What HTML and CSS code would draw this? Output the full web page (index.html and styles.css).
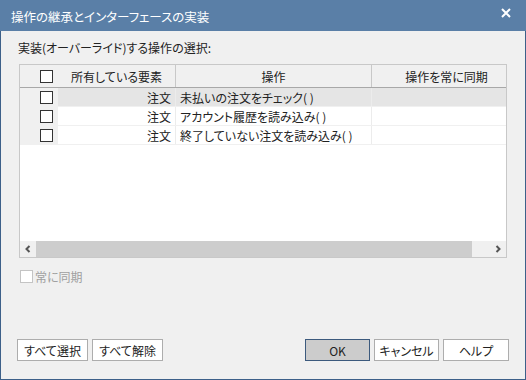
FILE: index.html
```html
<!DOCTYPE html>
<html>
<head>
	<title>操作の継承とインターフェースの実装</title>
	<meta charset="utf-8">
	<link rel="stylesheet" href="styles.css">
</head>
<body>
	<div class="window">
		<div class="titlebar">
			<span class="title">操作の継承とインターフェースの実装</span>
			<svg class="close" width="10" height="10" viewBox="0 0 10 10"><path d="M1 1 L9 9 M9 1 L1 9" stroke="#fff" stroke-width="2"/></svg>
		</div>
		<div class="content">
			<div class="prompt">実装(オーバーライド)する操作の選択:</div>
			<div class="list">
				<div class="viewport">
					<div class="row head">
						<div class="cell chk"><span class="box"></span></div>
						<div class="cell hc">所有している要素</div>
						<div class="cell hc">操作</div>
						<div class="cell hc">操作を常に同期</div>
					</div>
					<div class="row item selected">
						<div class="cell chk"><span class="box"></span></div>
						<div class="cell owner">注文</div>
						<div class="cell op">未払いの注文をチェック( )</div>
						<div class="cell"></div>
					</div>
					<div class="row item">
						<div class="cell chk"><span class="box"></span></div>
						<div class="cell owner">注文</div>
						<div class="cell op">アカウント履歴を読み込み( )</div>
						<div class="cell"></div>
					</div>
					<div class="row item">
						<div class="cell chk"><span class="box"></span></div>
						<div class="cell owner">注文</div>
						<div class="cell op">終了していない注文を読み込み( )</div>
						<div class="cell"></div>
					</div>
				</div>
				<div class="hscroll">
					<div class="arrow"><svg width="8" height="8" viewBox="0 0 8 8"><path d="M5.5 1 L2.5 4 L5.5 7" fill="none" stroke="#555" stroke-width="2"/></svg></div>
					<div class="thumb"></div>
					<div class="track"></div>
					<div class="arrow"><svg width="8" height="8" viewBox="0 0 8 8"><path d="M2.5 1 L5.5 4 L2.5 7" fill="none" stroke="#555" stroke-width="2"/></svg></div>
				</div>
			</div>
			<label class="sync"><span class="box disabled"></span>常に同期</label>
			<div class="buttons">
				<div class="group">
					<button class="btn">すべて選択</button>
					<button class="btn">すべて解除</button>
				</div>
				<div class="group">
					<button class="btn default">OK</button>
					<button class="btn">キャンセル</button>
					<button class="btn btn-help">ヘルプ</button>
				</div>
			</div>
		</div>
	</div>
</body>
</html>
```

FILE: styles.css
```css
body {
	margin: 0;
	font-family: "Noto Sans CJK JP", "Noto Sans", sans-serif;
	font-size: 12px;
	color: #222;
	font-feature-settings: "palt";
}

.window {
	width: 524px;
	height: 379px;
	border: 1px solid #3d6089;
	border-top: none;
	background-color: #f0f0f0;
	display: flex;
	flex-direction: column;
}

.titlebar {
	height: 31px;
	background-color: #5a7fa7;
	display: flex;
	align-items: center;
	justify-content: space-between;
	padding: 0 15px 0 11px;
	margin: 0 -1px;
	color: #fff;
}

.title {
	font-size: 12.5px;
	padding-top: 2px;
}

.close {
	margin-top: -6px;
}

.content {
	flex: 1;
	display: flex;
	flex-direction: column;
	padding: 0 16px 18px 16px;
}

.prompt {
	margin: 9px 0 0 1px;
	line-height: 15px;
}

.list {
	margin: 9px 0 0 2px;
	width: 486px;
	height: 192px;
	border: 1px solid #c8c8c8;
	background-color: #fff;
	display: flex;
	flex-direction: column;
}

.viewport {
	flex: 1;
	overflow: hidden;
}

.row {
	display: grid;
	grid-template-columns: 38px 118px 196px 150px;
}

.head {
	height: 22px;
	background-color: #f0f0f0;
	border-bottom: 1px solid #a8a8a8;
}

.head .cell {
	border-right: 1px solid #c8c8c8;
}

.head .chk {
	border-right: none;
}

.cell {
	display: flex;
	align-items: center;
	white-space: nowrap;
	overflow: hidden;
}

.hc {
	justify-content: center;
}

.item {
	height: 18px;
	border-bottom: 1px solid #f0f0f0;
}

.item .cell {
	border-right: 1px solid #ececec;
}

.item .chk {
	background-color: #f0f0f0;
	border-right: none;
}

.selected .cell {
	background-color: #e5e5e5;
}

.selected .chk {
	background-color: #f0f0f0;
}

.chk {
	justify-content: center;
	padding-left: 14px;
	box-sizing: border-box;
}

.owner {
	justify-content: flex-end;
	padding-right: 4px;
}

.op {
	padding-left: 4px;
}

.box {
	display: inline-block;
	width: 11px;
	height: 11px;
	border: 1px solid #333;
	background-color: #fff;
}

.box.disabled {
	border-color: #c4c4c4;
	margin-right: 2px;
}

.hscroll {
	height: 16px;
	display: flex;
	background-color: #f0f0f0;
}

.arrow {
	width: 16px;
	display: flex;
	align-items: center;
	justify-content: center;
}

.thumb {
	width: 436px;
	background-color: #cdcdcd;
}

.track {
	flex: 1;
}

.sync {
	display: flex;
	align-items: center;
	margin: 10px 0 0 3px;
	color: #a0a0a0;
}

.buttons {
	margin-top: auto;
	display: flex;
	justify-content: space-between;
}

.group {
	display: flex;
	gap: 4px;
}

.btn {
	font-family: inherit;
	font-size: 12px;
	font-feature-settings: "palt";
	color: #222;
	width: 71px;
	height: 22px;
	padding: 0;
	border: 1px solid #adadad;
	background-color: #fff;
}

.group + .group .btn {
	width: 65px;
}

.group + .group .btn-help {
	width: 66px;
}

.btn.default {
	border: 1px solid #3c5a7d;
	background-color: #cccccc;
}
```
